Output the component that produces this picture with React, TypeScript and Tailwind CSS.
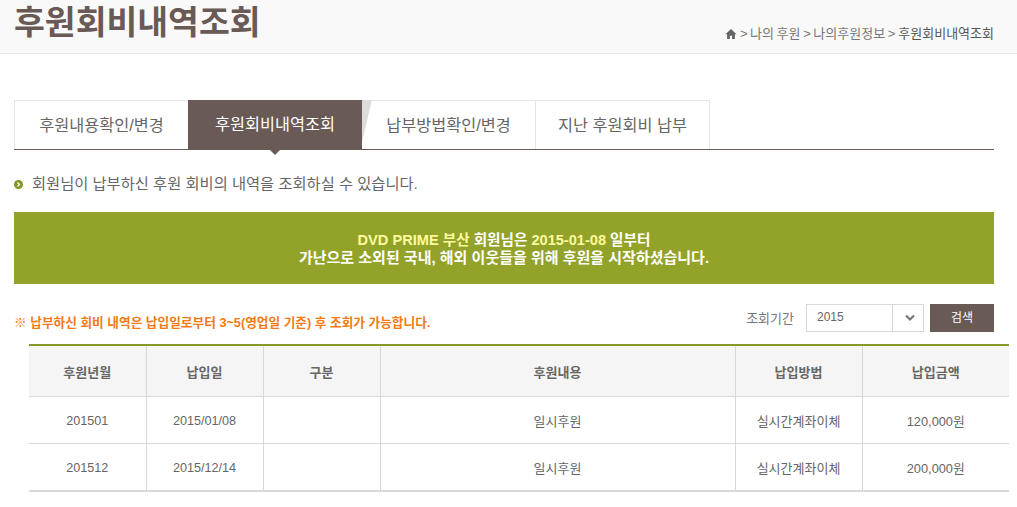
const font = '[font-family:"Liberation_Sans","Noto_Sans_CJK_KR",sans-serif]'

const tabs = ['후원내용확인/변경', '후원회비내역조회', '납부방법확인/변경', '지난 후원회비 납부']

const rows = [
  { month: '201501', date: '2015/01/08', kind: '', content: '일시후원', method: '실시간계좌이체', amount: '120,000원' },
  { month: '201512', date: '2015/12/14', kind: '', content: '일시후원', method: '실시간계좌이체', amount: '200,000원' },
]

const heads = ['후원년월', '납입일', '구분', '후원내용', '납입방법', '납입금액']
const widths = ['w-[117px]', 'w-[117px]', 'w-[117px]', 'w-[355px]', 'w-[127px]', 'w-[147px]']

export default function App() {
  return (
    <div className={`h-[507px] w-[1017px] overflow-hidden bg-white text-[#6a5a55] ${font}`}>
      {/* Title bar */}
      <div className="flex h-[54px] items-start justify-between border-b border-[#e8e8e8] bg-[#f9f9f9] pl-[14px] pr-[23px]">
        <h1 className="mt-[2px] text-[33.5px] leading-[42px] font-bold text-[#6a5a55]">후원회비내역조회</h1>
        <div className="mt-[26px] flex items-center text-[13px] leading-[16px] text-[#777] [word-spacing:-1px]">
          <svg className="mr-[2px] h-[12px] w-[12px]" viewBox="0 0 24 24" fill="#666">
            <path d="M12 2 1 12.5h3.2V22h5.6v-6.5h4.4V22h5.6v-9.5H23L12 2z" />
          </svg>
          <span className="ml-[1px]">&gt; 나의 후원 &gt; 나의후원정보 &gt; </span>
          <span className="ml-[3px] text-[#555]">후원회비내역조회</span>
        </div>
      </div>

      <div className="pl-[14px] pr-[23px] pt-[46px]">
        {/* Tabs */}
        <div className="relative flex h-[50px] border-b border-[#6a5a55]">
          {tabs.map((t, i) =>
            i === 1 ? (
              <div key={t} className="relative flex w-[174px] items-center justify-center bg-[#6a5a55] text-[16.3px] text-white">
                {t}
                <span className="absolute top-[49px] left-[81px] h-0 w-0 border-x-[6px] border-t-[6px] border-x-transparent border-t-[#6a5a55]" />
                <svg className="absolute top-0 left-[174px] h-[49px] w-[10px]" viewBox="0 0 10 49">
                  <polygon points="0,0 10,0 0,42" fill="#dcdcdc" />
                </svg>
              </div>
            ) : (
              <div
                key={t}
                className={`flex w-[174px] items-center justify-center border-t border-[#e5e5e5] text-[16.3px] text-[#666] ${i === 0 ? 'border-l' : ''} ${i === 3 ? 'border-r' : ''} ${i === 2 ? 'border-r' : ''}`}
              >
                {t}
              </div>
            ),
          )}
        </div>

        {/* Notice */}
        <div className="mt-[24px] flex h-[20px] items-center text-[15.3px] text-[#666]">
          <svg className="mr-[9px] h-[9px] w-[9px]" viewBox="0 0 9 9">
            <circle cx="4.5" cy="4.5" r="4.5" fill="#7f9a24" />
            <path d="M3.5 2.5 5.5 4.5 3.5 6.5" stroke="#fff" strokeWidth="1.3" fill="none" />
          </svg>
          회원님이 납부하신 후원 회비의 내역을 조회하실 수 있습니다.
        </div>

        {/* Banner */}
        <div className="mt-[18px] flex h-[72px] flex-col items-center justify-center bg-[#93a32a] pt-[2px] text-[15px] leading-[18px] font-bold text-white">
          <p className="text-[14.6px]">
            <span className="text-[#fbfb9e]">DVD PRIME 부산</span> 회원님은 <span className="text-[#fbfb9e]">2015-01-08</span> 일부터
          </p>
          <p>가난으로 소외된 국내, 해외 이웃들을 위해 후원을 시작하셨습니다.</p>
        </div>

        {/* Filter row */}
        <div className="mt-[20px] flex h-[28px] items-center">
          <p className="mt-[11px] flex-1 text-[12.7px] font-bold text-[#f57a14]">※ 납부하신 회비 내역은 납입일로부터 3~5(영업일 기준) 후 조회가 가능합니다.</p>
          <span className="mt-[2px] mr-[12px] text-[13px] text-[#777]">조회기간</span>
          <div className="flex h-[28px] w-[118px] border border-[#d8d8d8] text-[12px] text-[#666]">
            <span className="flex-1 pl-[10px] leading-[24px]">2015</span>
            <span className="flex w-[31px] items-center justify-center border-l border-[#d8d8d8] pl-[3px]">
              <svg className="h-[8px] w-[10px]" viewBox="0 0 10 8">
                <path d="M1 1.5 5 5.5 9 1.5" stroke="#777" strokeWidth="2.2" fill="none" />
              </svg>
            </span>
          </div>
          <button className="ml-[6px] h-[28px] w-[64px] bg-[#6a5a55] text-[12px] text-white">검색</button>
        </div>

        {/* Table */}
        <div className="mt-[12px] ml-[15px] w-[980px] border-t-2 border-b-2 border-t-[#869a2c] border-b-[#d8d8d8]">
          <table className="w-full table-fixed border-collapse text-center text-[13px] text-[#666]">
            <thead>
              <tr className="h-[50px] border-b border-[#d8d8d8] bg-[#f5f5f5]">
                {heads.map((h, i) => (
                  <th key={h} className={`${widths[i]} ${i < 5 ? 'border-r border-[#d8d8d8]' : ''} pt-[4px] font-bold text-[#666]`}>
                    {h}
                  </th>
                ))}
              </tr>
            </thead>
            <tbody>
              {rows.map((r, ri) => (
                <tr key={r.month} className={`h-[47px] ${ri === 0 ? 'border-b border-[#d8d8d8]' : ''}`}>
                  <td className="border-r border-[#d8d8d8] pt-[4px] text-[12.6px]">{r.month}</td>
                  <td className="border-r border-[#d8d8d8] pt-[4px] text-[12.6px]">{r.date}</td>
                  <td className="border-r border-[#d8d8d8] pt-[4px]">{r.kind}</td>
                  <td className="border-r border-[#d8d8d8] pt-[4px]">{r.content}</td>
                  <td className="border-r border-[#d8d8d8] pt-[4px]">{r.method}</td>
                  <td className="pt-[4px] text-[12.8px]">{r.amount}</td>
                </tr>
              ))}
            </tbody>
          </table>
        </div>
      </div>
    </div>
  )
}
